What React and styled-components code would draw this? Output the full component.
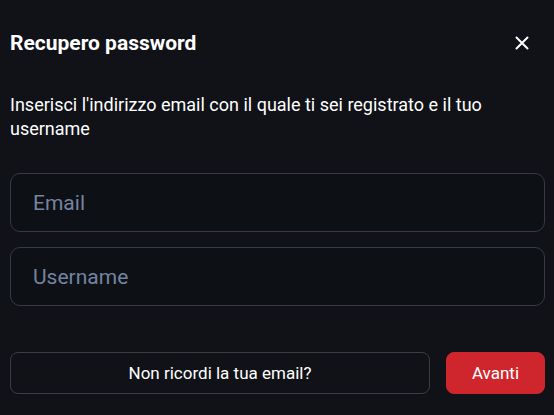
import React from 'react';
import styled, { createGlobalStyle } from 'styled-components';

const GlobalStyle = createGlobalStyle`
  html, body {
    margin: 0;
    padding: 0;
    background: #101217;
  }
  body {
    font-family: Roboto, "Liberation Sans", sans-serif;
    color: #ffffff;
  }
`;

const Modal = styled.div`
  width: 554px;
  height: 415px;
  box-sizing: border-box;
  padding: 0 9px 0 10px;
  background: #101217;
  display: flex;
  flex-direction: column;
`;

const Header = styled.div`
  height: 86px;
  display: flex;
  align-items: center;
  justify-content: space-between;
`;

const Title = styled.h2`
  margin: 0;
  font-size: 21px;
  font-weight: 700;
  line-height: 26px;
`;

const CloseButton = styled.button`
  background: none;
  border: none;
  padding: 0;
  margin-right: 16px;
  width: 14px;
  height: 14px;
  display: flex;
  color: #ffffff;
  cursor: pointer;
`;

const Description = styled.p`
  margin: 7px 0 0 0;
  font-size: 18px;
  line-height: 24px;
`;

const Fields = styled.div`
  margin-top: 32px;
  display: flex;
  flex-direction: column;
  gap: 15px;
`;

const Input = styled.input`
  height: 59px;
  box-sizing: border-box;
  padding: 0 22px;
  background: #0d1015;
  border: 1px solid #363a42;
  border-radius: 10px;
  color: #ffffff;
  font-family: Roboto, "Liberation Sans", sans-serif;
  font-size: 21px;
  outline: none;

  &::placeholder {
    color: #7684a0;
  }
`;

const Actions = styled.div`
  margin-top: 46px;
  display: flex;
  gap: 16px;
`;

const Button = styled.button`
  height: 42px;
  border-radius: 8px;
  font-family: Roboto, "Liberation Sans", sans-serif;
  font-size: 17px;
  color: #ffffff;
  cursor: pointer;
  border: 1px solid ${(p) => (p.$primary ? '#cf262e' : '#3a3d44')};
  background: ${(p) => (p.$primary ? '#cf262e' : 'transparent')};
  flex: ${(p) => (p.$primary ? '0 0 99px' : '1')};
`;

function CloseIcon() {
  return (
    <svg width="14" height="14" viewBox="0 0 14 14" fill="none">
      <path d="M1.5 1.5L12.5 12.5M12.5 1.5L1.5 12.5" stroke="currentColor" strokeWidth="2" strokeLinecap="round" />
    </svg>
  );
}

export default function App() {
  return (
    <>
      <GlobalStyle />
      <Modal>
        <Header>
          <Title>Recupero password</Title>
          <CloseButton aria-label="Chiudi">
            <CloseIcon />
          </CloseButton>
        </Header>
        <Description>
          Inserisci l&apos;indirizzo email con il quale ti sei registrato e il tuo username
        </Description>
        <Fields>
          <Input type="email" placeholder="Email" />
          <Input type="text" placeholder="Username" />
        </Fields>
        <Actions>
          <Button>Non ricordi la tua email?</Button>
          <Button $primary>Avanti</Button>
        </Actions>
      </Modal>
    </>
  );
}
